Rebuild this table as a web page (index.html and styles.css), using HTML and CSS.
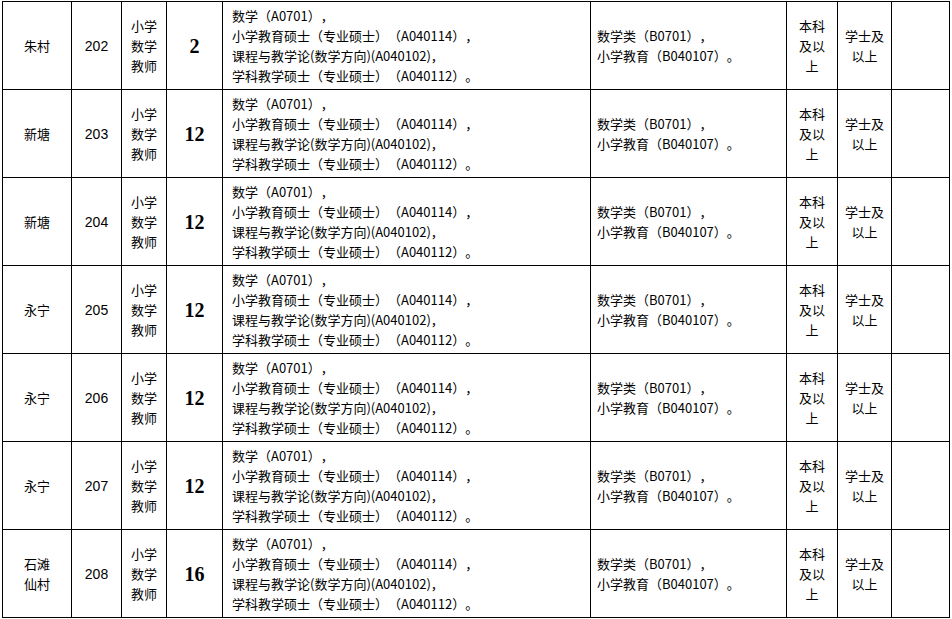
FILE: index.html
```html
<!DOCTYPE html>
<html lang="zh-CN">
<head>
<meta charset="utf-8">
<title>岗位表</title>
<link rel="stylesheet" href="styles.css">
</head>
<body>
<table class="grid">
  <colgroup>
    <col class="c-place"><col class="c-code"><col class="c-post"><col class="c-num">
    <col class="c-major1"><col class="c-major2"><col class="c-edu"><col class="c-deg"><col class="c-last">
  </colgroup>
  <tbody>
    <tr>
      <td class="center">朱村</td>
      <td class="center code">202</td>
      <td class="center">小学<br>数学<br>教师</td>
      <td class="center num">2</td>
      <td class="major">数学（A0701），<br>小学教育硕士（专业硕士）（A040114），<br>课程与教学论(数学方向)(A040102)，<br>学科教学硕士（专业硕士）（A040112）。</td>
      <td class="major2">数学类（B0701），<br>小学教育（B040107）。</td>
      <td class="center">本科<br>及以<br>上</td>
      <td class="center">学士及<br>以上</td>
      <td></td>
    </tr>
    <tr>
      <td class="center">新塘</td>
      <td class="center code">203</td>
      <td class="center">小学<br>数学<br>教师</td>
      <td class="center num">12</td>
      <td class="major">数学（A0701），<br>小学教育硕士（专业硕士）（A040114），<br>课程与教学论(数学方向)(A040102)，<br>学科教学硕士（专业硕士）（A040112）。</td>
      <td class="major2">数学类（B0701），<br>小学教育（B040107）。</td>
      <td class="center">本科<br>及以<br>上</td>
      <td class="center">学士及<br>以上</td>
      <td></td>
    </tr>
    <tr>
      <td class="center">新塘</td>
      <td class="center code">204</td>
      <td class="center">小学<br>数学<br>教师</td>
      <td class="center num">12</td>
      <td class="major">数学（A0701），<br>小学教育硕士（专业硕士）（A040114），<br>课程与教学论(数学方向)(A040102)，<br>学科教学硕士（专业硕士）（A040112）。</td>
      <td class="major2">数学类（B0701），<br>小学教育（B040107）。</td>
      <td class="center">本科<br>及以<br>上</td>
      <td class="center">学士及<br>以上</td>
      <td></td>
    </tr>
    <tr>
      <td class="center">永宁</td>
      <td class="center code">205</td>
      <td class="center">小学<br>数学<br>教师</td>
      <td class="center num">12</td>
      <td class="major">数学（A0701），<br>小学教育硕士（专业硕士）（A040114），<br>课程与教学论(数学方向)(A040102)，<br>学科教学硕士（专业硕士）（A040112）。</td>
      <td class="major2">数学类（B0701），<br>小学教育（B040107）。</td>
      <td class="center">本科<br>及以<br>上</td>
      <td class="center">学士及<br>以上</td>
      <td></td>
    </tr>
    <tr>
      <td class="center">永宁</td>
      <td class="center code">206</td>
      <td class="center">小学<br>数学<br>教师</td>
      <td class="center num">12</td>
      <td class="major">数学（A0701），<br>小学教育硕士（专业硕士）（A040114），<br>课程与教学论(数学方向)(A040102)，<br>学科教学硕士（专业硕士）（A040112）。</td>
      <td class="major2">数学类（B0701），<br>小学教育（B040107）。</td>
      <td class="center">本科<br>及以<br>上</td>
      <td class="center">学士及<br>以上</td>
      <td></td>
    </tr>
    <tr>
      <td class="center">永宁</td>
      <td class="center code">207</td>
      <td class="center">小学<br>数学<br>教师</td>
      <td class="center num">12</td>
      <td class="major">数学（A0701），<br>小学教育硕士（专业硕士）（A040114），<br>课程与教学论(数学方向)(A040102)，<br>学科教学硕士（专业硕士）（A040112）。</td>
      <td class="major2">数学类（B0701），<br>小学教育（B040107）。</td>
      <td class="center">本科<br>及以<br>上</td>
      <td class="center">学士及<br>以上</td>
      <td></td>
    </tr>
    <tr>
      <td class="center">石滩<br>仙村</td>
      <td class="center code">208</td>
      <td class="center">小学<br>数学<br>教师</td>
      <td class="center num">16</td>
      <td class="major">数学（A0701），<br>小学教育硕士（专业硕士）（A040114），<br>课程与教学论(数学方向)(A040102)，<br>学科教学硕士（专业硕士）（A040112）。</td>
      <td class="major2">数学类（B0701），<br>小学教育（B040107）。</td>
      <td class="center">本科<br>及以<br>上</td>
      <td class="center">学士及<br>以上</td>
      <td></td>
    </tr>
  </tbody>
</table>
</body>
</html>
```

FILE: styles.css
```css
html, body {
  margin: 0;
  padding: 0;
  background: #ffffff;
}

body {
  padding: 1px 0 0 2px;
  font-family: "Noto Sans CJK SC", sans-serif;
  font-size: 13px;
  line-height: 20px;
  color: #000000;
  text-spacing-trim: space-all;
}

.grid {
  border-collapse: collapse;
  table-layout: fixed;
  width: 947px;
}

.c-place { width: 69px; }
.c-code { width: 50px; }
.c-post { width: 45px; }
.c-num { width: 56px; }
.c-major1 { width: 368px; }
.c-major2 { width: 196px; }
.c-edu { width: 51px; }
.c-deg { width: 54px; }
.c-last { width: 58px; }

.grid td {
  border: 1px solid #000000;
  height: 87px;
  padding: 0;
  vertical-align: middle;
}

.center {
  text-align: center;
}

.code {
  font-family: "Liberation Sans", sans-serif;
  font-size: 14px;
}

.num {
  font-family: "Liberation Serif", serif;
  font-weight: bold;
  font-size: 20px;
}

.major {
  padding-left: 9px !important;
  white-space: nowrap;
}

.major2 {
  padding-left: 6px !important;
  white-space: nowrap;
}
```
